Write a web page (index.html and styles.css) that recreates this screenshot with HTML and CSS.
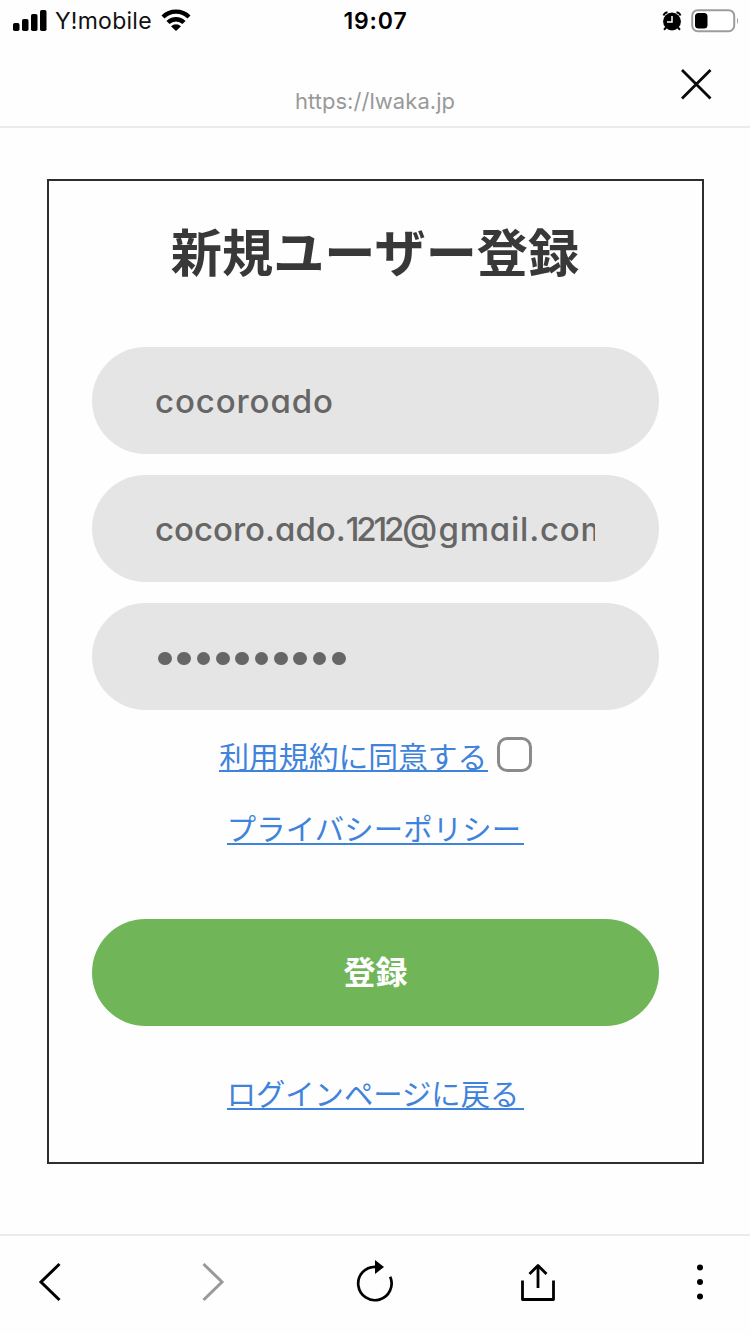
FILE: index.html
```html
<!DOCTYPE html>
<html lang="ja">
<head>
<meta charset="utf-8">
<title>新規ユーザー登録</title>
<link rel="stylesheet" href="styles.css">
</head>
<body>
<div class="screen">
  <div class="status">
    <div class="status-left">
      <svg class="signal" width="34" height="22" viewBox="0 0 34 22"><rect x="0" y="13" width="6.5" height="8" rx="1.8"/><rect x="9" y="9" width="6.5" height="12" rx="1.8"/><rect x="18" y="4" width="6.5" height="17" rx="1.8"/><rect x="27" y="0" width="6.5" height="21" rx="1.8"/></svg>
      <span class="carrier">Y!mobile</span>
      <svg class="wifi" width="30" height="23" viewBox="0 0 30 23"><path d="M2 8a18.500 18.500 0 0 1 26 0M7 13.500a11.300 11.300 0 0 1 16 0" fill="none" stroke="#000" stroke-width="4.4"/><path d="M15 22l-5-4.800a7.200 7.200 0 0 1 10 0z"/></svg>
    </div>
    <span class="clock">19:07</span>
    <div class="status-right">
      <svg width="20" height="20" viewBox="0 0 20 20"><circle cx="10" cy="10.500" r="8.900"/><path d="M1.500 4.500Q2.500 1.800 5.500 1.300M14.500 1.300Q17.500 1.800 18.500 4.500M4.500 16l-2.500 2.700M15.500 16l2.500 2.700" fill="none" stroke="#000" stroke-width="2"/><path d="M10 5v6H5" fill="none" stroke="#fff" stroke-width="1.500"/></svg>
      <svg width="48" height="24" viewBox="0 0 48 24"><rect x="1.200" y="1.200" width="42" height="21" rx="5.500" fill="#fff" stroke="#9c9c9c" stroke-width="2"/><rect x="4" y="4" width="12.500" height="15.500" rx="3.500"/><path d="M46 8.500q2.200 3.200 0 6.500z" fill="#9c9c9c"/></svg>
    </div>
  </div>
  <header class="address">
    <span class="url">https://lwaka.jp</span>
    <svg class="close" width="32" height="32" viewBox="0 0 32 32"><path d="M2 2l28.500 28.500M30.500 2L2 30.500" fill="none" stroke="#0a0a0a" stroke-width="2.800"/></svg>
  </header>
  <main class="content">
    <form class="card">
      <h1 class="title">新規ユーザー登録</h1>
      <div class="fields">
        <div class="field"><span class="value name">cocoroado</span></div>
        <div class="field"><span class="value email">cocoro.ado.<span class="digits">1212</span><span class="at">@</span><span class="domain">gmail.com</span></span></div>
        <div class="field password"><i class="dot"></i><i class="dot"></i><i class="dot"></i><i class="dot"></i><i class="dot"></i><i class="dot"></i><i class="dot"></i><i class="dot"></i><i class="dot"></i><i class="dot"></i></div>
      </div>
      <div class="terms"><a class="link agree">利用規約に同意する</a><span class="checkbox"></span></div>
      <a class="link privacy">プライバシーポリシー</a>
      <div class="submit">登録</div>
      <a class="link">ログインページに戻る</a>
    </form>
  </main>
  <nav class="toolbar">
    <svg width="38" height="40" viewBox="0 0 24 40"><path d="M21.500 2L3 20l18.500 18" fill="none" stroke="#000" stroke-width="3"/></svg>
    <svg width="38" height="40" viewBox="0 0 24 40"><path d="M2.500 2L21 20 2.500 38" fill="none" stroke="#999" stroke-width="3"/></svg>
    <svg width="38" height="44" viewBox="0 0 38 44"><path d="M34.200 16.800A16.700 16.700 0 1 1 19 6.800" fill="none" stroke="#000" stroke-width="2.700"/><path d="M19 0l9 7-9 7z"/></svg>
    <svg width="38" height="40" viewBox="0 0 36 40"><path d="M2.500 18.500V37.500H33.500V18.500M18 26V4M9.500 12L18 3.500 26.500 12" fill="none" stroke="#000" stroke-width="2.800" stroke-linejoin="round"/></svg>
    <svg width="38" height="36" viewBox="0 0 8 36"><circle cx="4" cy="3.500" r="3"/><circle cx="4" cy="18" r="3"/><circle cx="4" cy="32.500" r="3"/></svg>
  </nav>
</div>
</body>
</html>
```
FILE: styles.css
```css
* { box-sizing: border-box; }
body { margin: 0; background: #fefefe; font-family: Inter, "Noto Sans CJK JP", sans-serif; }
svg { display: block; flex: none; }
.screen { width: 750px; height: 1334px; display: flex; flex-direction: column; overflow: hidden; }
.status { height: 40px; display: grid; grid-template-columns: 1fr auto 1fr; align-items: center; padding: 0 11px 0 13px; }
.status-left { display: flex; align-items: center; }
.carrier { font-size: 23px; line-height: 40px; padding-top: 1px; margin-left: 8px; width: 98px; letter-spacing: 0.25px; white-space: nowrap; color: #111; }
.wifi { margin-left: 8px; }
.clock { font-size: 23px; line-height: 40px; padding-top: 1px; margin-right: 1px; font-weight: 600; letter-spacing: 0.9px; }
.status-right { display: flex; justify-content: flex-end; align-items: center; gap: 9.500px; }
.address { height: 88px; border-bottom: 2px solid #ebebeb; display: grid; grid-template-columns: 1fr auto 1fr; }
.url { grid-column: 2; font-size: 22px; line-height: 28px; margin-top: 47px; letter-spacing: 0.05px; color: #999; }
.close { justify-self: end; margin: 28px 38px 0 0; }
.content { height: 1106px; padding: 51px 46px 0 47px; }
.card { height: 985px; border: 2px solid #2d2e31; display: flex; flex-direction: column; align-items: center; padding: 0 43px; }
.title { margin: 31px 1px 0 0; height: 76px; font: 700 51.200px/76px "Noto Sans CJK JP", sans-serif; color: #383838; }
.fields { width: 567px; margin-top: 59px; display: flex; flex-direction: column; gap: 21px; }
.field { height: 107px; border-radius: 54px; background: #e5e5e5; padding: 0 64px 0 63px; display: flex; align-items: center; }
.value { width: 440px; overflow: hidden; white-space: nowrap; font-size: 33px; line-height: 50px; font-weight: 500; font-feature-settings: "cv11"; color: #666; }
.name { letter-spacing: 0.9px; }
.email { letter-spacing: 0; }
.digits { letter-spacing: -3.200px; margin-right: 1px; }
.at { font-size: 36px; line-height: 1; }
.domain { letter-spacing: 0.800px; margin-left: 1px; }
.password { gap: 5.850px; padding-left: 66px; padding-top: 4px; }
.dot { width: 13.500px; height: 13.500px; border-radius: 50%; background: #666; }
.terms { display: flex; margin-top: 24px; height: 38px; }
.link { display: block; flex: none; height: 38px; padding-right: 5px; border-bottom: 2px solid #3f83dc; font: 400 29.330px/40px "Noto Sans CJK JP", sans-serif; color: #3f83dc; white-space: nowrap; }
.agree { width: 268.500px; padding: 0; font-size: 29.800px; line-height: 42px; }
.checkbox { width: 35px; height: 35px; margin: 3px 0 0 9px; border: 3px solid #8b8b8b; border-radius: 10px; background: #fff; }
.privacy { margin-top: 35px; padding-right: 3px; letter-spacing: 0.200px; }
.submit { width: 567px; height: 107px; margin: 74px 0 46px; border-radius: 54px; background: #70b658; color: #fff; text-align: center; font: 700 32px/102px "Noto Sans CJK JP", sans-serif; }
.toolbar { height: 100px; border-top: 2px solid #ebebeb; display: flex; justify-content: space-between; align-items: center; padding: 0 31px 6px; }
```
